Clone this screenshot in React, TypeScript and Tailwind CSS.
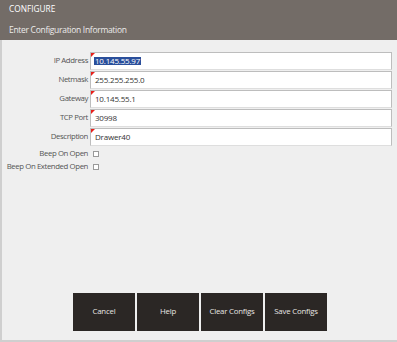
import React from "react";

const fields = [
  { label: "IP Address", value: "10.145.55.97", selected: true },
  { label: "Netmask", value: "255.255.255.0" },
  { label: "Gateway", value: "10.145.55.1" },
  { label: "TCP Port", value: "30998" },
  { label: "Description", value: "Drawer40" },
];

export default function App() {
  return (
    <div
      className="w-[397px] h-[342px] bg-[#efefef] flex flex-col overflow-hidden"
      style={{ fontFamily: '"Open Sans", "Noto Sans", sans-serif' }}
    >
      <div className="h-[40px] bg-[#736c67] flex flex-col shrink-0">
        <div className="h-[18px] pl-[9px] pt-[1px] flex items-center text-[8.3px] text-white leading-none">
          CONFIGURE
        </div>
        <div className="h-[22px] pl-[9px] pt-[3px] flex items-center text-[8.5px] tracking-[-0.3px] text-[#ecebea] leading-none">
          Enter Configuration Information
        </div>
      </div>
      <div className="flex-1 flex flex-col border-l-2 border-b-2 border-[#cfcfcf]">
        <div className="pt-[12px] flex flex-col gap-px">
          {fields.map((f) => (
            <div key={f.label} className="flex items-center h-[18px]">
              <div className="w-[88px] pr-[2px] text-right text-[7.8px] tracking-[-0.4px] text-[#555] leading-none whitespace-nowrap">
                {f.label}
              </div>
              <div className="relative w-[302px] h-[18px] bg-white border border-[#bdbdbd] border-b-[#dedede] flex items-center pl-[3px] text-[8px] tracking-[-0.2px] text-[#333] leading-none">
                <span className="absolute left-0 top-0 w-0 h-0 border-t-[4px] border-r-[4px] border-t-[#e8201a] border-r-transparent" />
                {f.selected ? (
                  <span className="bg-[#2a4f9b] text-white px-[1px]">{f.value}</span>
                ) : (
                  <span className="px-[1px]">{f.value}</span>
                )}
              </div>
            </div>
          ))}
        </div>
        <div className="mt-[3px] flex flex-col gap-[4px]">
          {["Beep On Open", "Beep On Extended Open"].map((l) => (
            <div key={l} className="flex items-center h-[9px]">
              <div className="w-[88px] pr-[2px] text-right text-[7.8px] tracking-[-0.4px] text-[#555] leading-none whitespace-nowrap">
                {l}
              </div>
              <div className="ml-[3px] w-[6px] h-[6px] border border-[#999] bg-white" />
            </div>
          ))}
        </div>
        <div className="flex-1" />
        <div className="flex gap-[2px] pl-[71px] pb-[9px]">
          {["Cancel", "Help", "Clear Configs", "Save Configs"].map((b) => (
            <div
              key={b}
              className="w-[62px] h-[38px] bg-[#2b2725] text-[#e8e6e4] text-[7.8px] tracking-[-0.2px] flex items-center justify-center"
            >
              {b}
            </div>
          ))}
        </div>
      </div>
    </div>
  );
}
